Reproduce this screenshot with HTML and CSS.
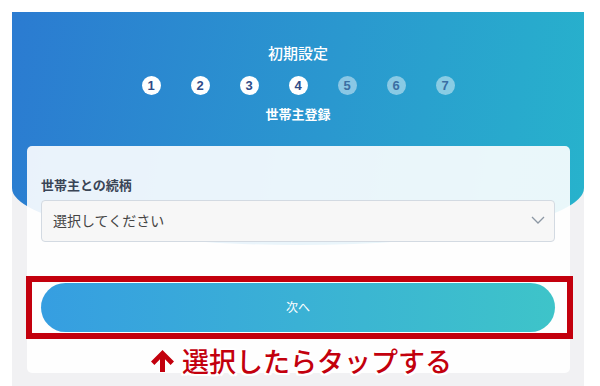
FILE: index.html
```html
<!DOCTYPE html>
<html lang="ja">
<head>
    <meta charset="UTF-8">
    <meta name="viewport" content="width=device-width, initial-scale=1.0">
    <title>初期設定</title>
    <link rel="stylesheet" href="styles.css">
</head>
<body>

    <div class="app">
        <!-- Header with steps -->
        <div class="header">
            <div class="title">初期設定</div>
            <div class="steps">
                <span class="step done">1</span>
                <span class="step done">2</span>
                <span class="step done">3</span>
                <span class="step done">4</span>
                <span class="step">5</span>
                <span class="step">6</span>
                <span class="step">7</span>
            </div>
            <div class="step-name">世帯主登録</div>
        </div>

        <!-- Form card -->
        <div class="card">
            <label class="label">世帯主との続柄</label>
            <div class="select">
                <span>選択してください</span>
                <svg width="14" height="8" viewBox="0 0 14 8"><path d="M1 1l6 6 6-6" fill="none" stroke="#8c97a4" stroke-width="1.3"/></svg>
            </div>
            <div class="next-btn">次へ</div>
        </div>

        <!-- Annotation -->
        <div class="mark-box"></div>
        <div class="mark-text">
            <svg width="27" height="24" viewBox="0 0 27 24"><path d="M13.5 1L2 12.5l3.4 3.4 5.6-5.6V23h5V10.3l5.6 5.6 3.4-3.4z" fill="#c3000d" stroke="#fff" stroke-width="2" paint-order="stroke"/></svg>
            <span>選択したらタップする</span>
        </div>
    </div>

</body>
</html>
```

FILE: styles.css
```css
/* Page */
body {
    margin: 0;
    background: #fff;
    font-family: "Noto Sans CJK JP", "Noto Sans", sans-serif;
}

.app {
    position: relative;
    margin: 0 16px 0 12px;
    margin-top: 12px;
    height: 374px;
    background: #f1f1f3;
    overflow: hidden;
}

/* Blue header with curved bottom */
.header {
    height: 233px;
    box-sizing: border-box;
    padding-top: 31px;
    text-align: center;
    color: #fff;
    background: linear-gradient(100deg, #2b7bd1 0%, #2a98cf 55%, #27b3cc 100%);
    border-radius: 0 0 50% 50% / 0 0 57px 57px;
}

.title {
    font-size: 15px;
    line-height: 20px;
    font-weight: 500;
}

.steps {
    display: flex;
    justify-content: center;
    gap: 30px;
    margin-top: 13px;
}

.step {
    width: 19px;
    height: 19px;
    border-radius: 50%;
    background: rgba(255, 255, 255, 0.45);
    color: #3a6ea3;
    font-family: "Liberation Sans", sans-serif;
    font-weight: bold;
    font-size: 13px;
    line-height: 19px;
}

.step.done {
    background: #fff;
    color: #2f4b88;
}

.step-name {
    margin-top: 10px;
    font-size: 13px;
    line-height: 18px;
    font-weight: bold;
}

/* Card */
.card {
    margin: -99px 14px 0 15px;
    padding: 30px 15px 41px 14px;
    background: rgba(255, 255, 255, 0.9);
    border-radius: 5px;
    position: relative;
}

.label {
    display: block;
    font-size: 13px;
    line-height: 18px;
    font-weight: bold;
    color: #3a4556;
}

.select {
    margin-top: 6px;
    height: 42px;
    box-sizing: border-box;
    border: 1px solid #d3dae2;
    border-radius: 4px;
    background: #f7f7f7;
    display: flex;
    align-items: center;
    justify-content: space-between;
    padding: 0 9px 3px 11px;
    font-size: 14px;
    color: #444;
}

.next-btn {
    margin-top: 41px;
    height: 49px;
    border-radius: 25px;
    background: linear-gradient(to right, #369ee1, #3ec4c9);
    color: #fff;
    font-size: 12px;
    line-height: 47px;
    text-align: center;
}

/* Red annotation over the button */
.mark-box {
    position: absolute;
    left: 14px;
    top: 264px;
    width: 547px;
    height: 63px;
    box-sizing: border-box;
    border: 6px solid #c3000d;
}

.mark-text {
    position: absolute;
    left: 137px;
    top: 331px;
    display: flex;
    align-items: center;
    gap: 6px;
    color: #c3000d;
    font-size: 27px;
    font-weight: 500;
    line-height: 36px;
    text-shadow: 2px 0 #fff, -2px 0 #fff, 0 2px #fff, 0 -2px #fff,
        2px 2px #fff, -2px 2px #fff, 2px -2px #fff, -2px -2px #fff;
}
```
